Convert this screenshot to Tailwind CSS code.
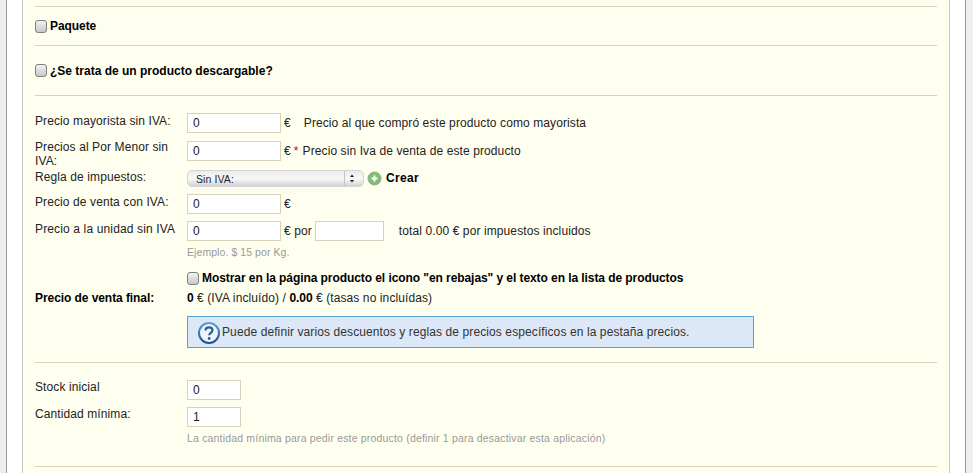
<!DOCTYPE html>
<html lang="es">
<head>
    <meta charset="UTF-8">
    <title>Producto</title>
    <script src="https://cdn.jsdelivr.net/npm/@tailwindcss/browser@4"></script>
</head>
<body class="h-[473px] overflow-hidden bg-white font-['Liberation_Sans',Arial,sans-serif] text-[12px] leading-[14px] tracking-[0.1px] text-[#222]">
    <div class="flex h-[473px]">
        <div class="w-[7px] shrink-0 border-r border-[#999] bg-[#eeeeee]"></div>
        <div class="w-[15px] shrink-0 bg-white"></div>

        <!-- Panel -->
        <div class="w-[928px] shrink-0 border-x border-[#c8c8c0] bg-[#fffff0] px-3 pt-[6px]">
            <div class="border-t border-[#d8d2bb]"></div>

            <!-- Paquete -->
            <label class="flex h-[38px] items-center gap-[3px] font-bold tracking-[-0.07px] text-black">
                <span class="h-[13px] w-[12px] rounded-[3px] border border-[#808080] bg-gradient-to-b from-[#f2f2f2] to-[#c8c8c8]"></span>
                <span>Paquete</span>
            </label>
            <div class="border-t border-[#d8d2bb]"></div>

            <!-- Descargable -->
            <label class="flex h-[49px] items-center gap-[3px] font-bold tracking-normal text-black">
                <span class="h-[13px] w-[12px] rounded-[3px] border border-[#808080] bg-gradient-to-b from-[#f2f2f2] to-[#c8c8c8]"></span>
                <span>¿Se trata de un producto descargable?</span>
            </label>
            <div class="border-t border-[#d8d2bb]"></div>

            <!-- Precios -->
            <div class="pt-[17px]">
                <div class="flex h-[28px]">
                    <div class="w-[152px] shrink-0 pt-[1px]">Precio mayorista sin IVA:</div>
                    <input value="0" class="h-[20px] w-[94px] border border-[#d8d2bb] bg-white px-[5px] text-[#222]">
                    <span class="pl-[3px] pt-[3px]">€</span>
                    <span class="pl-[13px] pt-[3px]">Precio al que compró este producto como mayorista</span>
                </div>
                <div class="flex h-[29px]">
                    <div class="-mt-[1px] w-[152px] shrink-0 pr-[8px]">Precios al Por Menor sin IVA:</div>
                    <input value="0" class="h-[20px] w-[94px] border border-[#d8d2bb] bg-white px-[5px] text-[#222]">
                    <span class="pl-[3px] pt-[3px]">€</span>
                    <span class="pl-[3px] pt-[3px] text-[#c00]">*</span>
                    <span class="pl-[4px] pt-[3px]">Precio sin Iva de venta de este producto</span>
                </div>
                <div class="flex h-[24px]">
                    <div class="w-[152px] shrink-0">Regla de impuestos:</div>
                    <div class="flex h-[17px] w-[177px] items-center justify-between rounded-[5px] border border-[#d4d4d4] bg-gradient-to-b from-[#ececec] via-[#f8f8f8] to-[#d4d4d4] pl-[8px] pr-[5px] text-[10.5px]">
                        <span>Sin IVA:</span>
                        <svg width="14" height="15" viewBox="0 0 14 15"><path d="M0.5 0V15" stroke="#c4c4c4"/><path d="M8 3.500l2 2.500h-4zM8 11.500l2-2.500h-4z" fill="#222"/></svg>
                    </div>
                    <svg class="ml-[3px] mt-[1px]" width="15" height="15" viewBox="0 0 15 15"><circle cx="7.500" cy="7.500" r="6.500" fill="#7cc26a" stroke="#9aa894"/><path d="M7.500 4.500v6M4.500 7.500h6" stroke="#fff" stroke-width="2"/></svg>
                    <span class="pl-[4px] pt-[1px] font-bold tracking-[0.3px] text-black">Crear</span>
                </div>
                <div class="flex h-[27px]">
                    <div class="w-[152px] shrink-0 pt-[1px]">Precio de venta con IVA:</div>
                    <input value="0" class="h-[20px] w-[94px] border border-[#d8d2bb] bg-white px-[5px] text-[#222]">
                    <span class="pl-[3px] pt-[3px]">€</span>
                </div>
                <div class="flex h-[24px]">
                    <div class="w-[152px] shrink-0 pt-[1px] tracking-[0.14px]">Precio a la unidad sin IVA</div>
                    <input value="0" class="h-[20px] w-[94px] border border-[#d8d2bb] bg-white px-[5px] text-[#222]">
                    <span class="pl-[3px] pt-[3px]">€ por</span>
                    <input class="ml-[3px] h-[20px] w-[69px] border border-[#d8d2bb] bg-white">
                    <span class="pl-[15px] pt-[3px]">total 0.00 € por impuestos incluidos</span>
                </div>
                <div class="h-[23px] pl-[152px] text-[10.5px] tracking-[0.07px] text-[#999]">Ejemplo. $ 15 por Kg.</div>
                <label class="flex h-[20px] items-center gap-[3px] pl-[152px] font-bold tracking-[-0.07px] text-black">
                    <span class="h-[13px] w-[12px] rounded-[3px] border border-[#808080] bg-gradient-to-b from-[#f2f2f2] to-[#c8c8c8]"></span>
                    <span>Mostrar en la página producto el icono "en rebajas" y el texto en la lista de productos</span>
                </label>
                <div class="mb-[8px] flex h-[20px] items-center">
                    <div class="w-[152px] shrink-0 font-bold tracking-[-0.07px] text-black">Precio de venta final:</div>
                    <div><b class="tracking-[-0.07px] text-black">0</b> € (IVA incluído) / <b class="tracking-[-0.07px] text-black">0.00</b> € (tasas no incluídas)</div>
                </div>
                <div class="ml-[152px] flex h-[32px] w-[567px] items-center border border-[#5ba3cc] bg-[#dce8f7] pl-[9px] text-[#333]">
                    <svg width="24" height="24" viewBox="0 0 24 24" class="mt-[2px] shrink-0">
                        <defs><linearGradient id="ring" x1="0" y1="0" x2="0" y2="1"><stop offset="0" stop-color="#5f9fd4"/><stop offset="1" stop-color="#1f4f86"/></linearGradient></defs>
                        <circle cx="12" cy="12" r="10" fill="#eef4fb" stroke="url(#ring)" stroke-width="2"/>
                        <path d="M8.500 9.500c0-2 1.500-3.200 3.500-3.200s3.500 1.200 3.500 3c0 2.600-3.300 2.600-3.300 5" fill="none" stroke="#2f5f92" stroke-width="2.200"/>
                        <circle cx="12.200" cy="17.500" r="1.400" fill="#2f5f92"/>
                    </svg>
                    <span class="pl-[1px]">Puede definir varios descuentos y reglas de precios específicos en la pestaña precios.</span>
                </div>
            </div>
            <div class="mt-[14px] border-t border-[#d8d2bb]"></div>

            <!-- Stock -->
            <div class="pt-[17px]">
                <div class="flex h-[27px]">
                    <div class="w-[152px] shrink-0">Stock inicial</div>
                    <input value="0" class="h-[20px] w-[54px] border border-[#d8d2bb] bg-white px-[5px] text-[#222]">
                </div>
                <div class="flex h-[24px]">
                    <div class="w-[152px] shrink-0">Cantidad mínima:</div>
                    <input value="1" class="h-[20px] w-[54px] border border-[#d8d2bb] bg-white px-[5px] text-[#222]">
                </div>
                <div class="h-[15px] pl-[152px] text-[10.5px] tracking-[0.18px] text-[#999]">La cantidad mínima para pedir este producto (definir 1 para desactivar esta aplicación)</div>
            </div>
            <div class="mt-[20px] border-t border-[#d8d2bb]"></div>
        </div>

        <div class="w-[15px] shrink-0 bg-white"></div>
        <div class="grow border-l border-[#999] bg-[#eeeeee]"></div>
    </div>
</body>
</html>
